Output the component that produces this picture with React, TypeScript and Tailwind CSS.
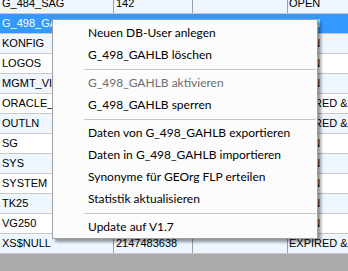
import React from "react";

type Row = { name: string; id: string; c3: string; status: string };

const rows: Row[] = [
  { name: "G_484_SAG", id: "142", c3: "", status: "OPEN" },
  { name: "G_498_GAHLB", id: "270", c3: "", status: "OPEN" },
  { name: "KONFIG", id: "", c3: "", status: "OPEN" },
  { name: "LOGOS", id: "", c3: "", status: "OPEN" },
  { name: "MGMT_VIEW", id: "", c3: "", status: "OPEN" },
  { name: "ORACLE_OCM", id: "", c3: "", status: "EXPIRED & LOCKED" },
  { name: "OUTLN", id: "", c3: "", status: "EXPIRED & LOCKED" },
  { name: "SG", id: "", c3: "", status: "OPEN" },
  { name: "SYS", id: "", c3: "", status: "OPEN" },
  { name: "SYSTEM", id: "", c3: "", status: "OPEN" },
  { name: "TK25", id: "", c3: "", status: "OPEN" },
  { name: "VG250", id: "", c3: "", status: "OPEN" },
  { name: "XS$NULL", id: "2147483638", c3: "", status: "EXPIRED & LOCKED" },
];

type Item = { label: string; disabled?: boolean } | "sep";

const items: Item[] = [
  { label: "Neuen DB-User anlegen" },
  { label: "G_498_GAHLB löschen" },
  "sep",
  { label: "G_498_GAHLB aktivieren", disabled: true },
  { label: "G_498_GAHLB sperren" },
  "sep",
  { label: "Daten von G_498_GAHLB exportieren" },
  { label: "Daten in G_498_GAHLB importieren" },
  { label: "Synonyme für GEOrg FLP erteilen" },
  { label: "Statistik aktualisieren" },
  "sep",
  { label: "Update auf V1.7" },
];

export default function App() {
  return (
    <div className="relative w-[348px] h-[271px] overflow-hidden bg-[#ababab]">
      <div
        className="-mt-[6px] flex flex-col text-[11px] text-black"
        style={{ fontFamily: '"Liberation Sans", Arial, sans-serif' }}
      >
        {rows.map((r, i) => {
          const selected = i === 1;
          const bg = selected ? "bg-[#3399ff] text-white" : i % 2 === 0 ? "bg-[#eef6ff]" : "bg-white";
          const cell = selected ? "" : "border-r border-[#a0a0a0]";
          return (
            <div key={r.name} className={`flex h-[20px] border-b border-[#c8c8c8] ${bg}`}>
              <div className={`w-[114px] shrink-0 pl-[2px] flex items-center whitespace-nowrap overflow-hidden ${cell}`}>
                {r.name}
              </div>
              <div className={`w-[79px] shrink-0 pl-[2px] flex items-center whitespace-nowrap overflow-hidden ${cell}`}>
                {r.id}
              </div>
              <div className={`w-[95px] shrink-0 pl-[2px] flex items-center whitespace-nowrap overflow-hidden ${cell}`}>
                {r.c3}
              </div>
              <div className="flex-1 pl-[1px] flex items-center whitespace-nowrap overflow-hidden">
                {r.status}
              </div>
            </div>
          );
        })}
      </div>

      <div
        className="absolute left-[52px] top-[19px] w-[266px] border border-[#a0a0a0] bg-[#fcfcfc] pt-[2px] shadow-[3px_3px_3px_rgba(0,0,0,0.4)] text-[12px]"
        style={{ fontFamily: 'Lato, "Liberation Sans", sans-serif' }}
      >
        {items.map((it, i) =>
          it === "sep" ? (
            <div key={i} className="h-[6px] flex items-center pl-[31px] pr-[1px]">
              <div className="h-px w-full bg-[#c8c8c8]" />
            </div>
          ) : (
            <div
              key={i}
              className={`h-[22px] flex items-center pl-[35px] whitespace-nowrap ${
                it.disabled ? "text-[#6d6d6d]" : "text-black"
              }`}
            >
              {it.label}
            </div>
          )
        )}
      </div>
    </div>
  );
}
